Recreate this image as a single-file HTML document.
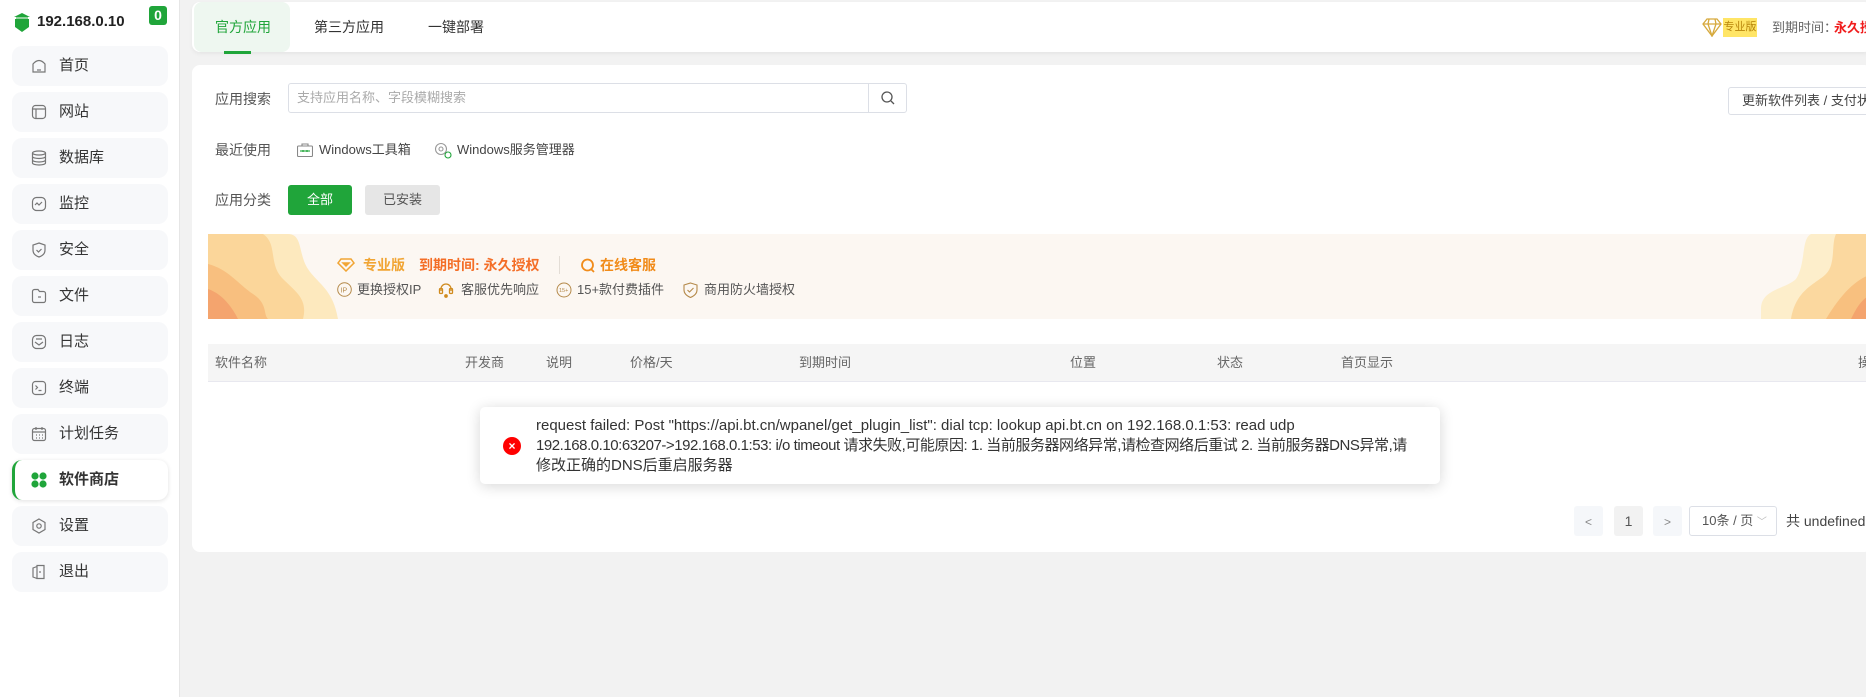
<!DOCTYPE html>
<html><head><meta charset="utf-8"><style>
*{box-sizing:border-box;margin:0;padding:0}
body{width:1866px;height:697px;overflow:hidden;background:#f2f2f2;font-family:"Liberation Sans","Noto Sans CJK SC",sans-serif;color:#333;position:relative;font-size:14px}
.abs{position:absolute;white-space:nowrap}
#side{left:0;top:0;width:180px;height:697px;background:#fff;border-right:1px solid #e6e6e6}
.nav{position:absolute;left:12px;width:156px;height:40px;background:#f7f8fa;border-radius:10px;font-size:15px;line-height:40px;padding-left:47px;color:#333}
.nav svg{position:absolute;left:19px;top:12px}
.nav.act{background:#fff;box-shadow:0 1px 5px rgba(0,0,0,.12);border-left:3px solid #20a53a;padding-left:44px;font-weight:bold}
.nav.act svg{left:16px}
#tabs{left:192px;top:2px;width:1680px;height:50px;background:#fff;border-radius:8px;box-shadow:0 2px 4px rgba(0,0,0,.05)}
.tab{position:absolute;top:0;height:50px;line-height:50px;font-size:14px;color:#333}
#card{left:192px;top:65px;width:1680px;height:487px;background:#fff;border-radius:8px}
.lbl{position:absolute;font-size:14px;color:#555}
.th{position:absolute;top:0;line-height:37px;font-size:13px;color:#666}
.pg{position:absolute;top:441px;height:30px;width:29px;background:#f5f7fa;border-radius:3px;text-align:center;line-height:30px;color:#888;font-size:14px}
</style></head><body>
<div id="side" class="abs">
  <svg class="abs" style="left:13px;top:13px" width="18" height="19" viewBox="0 0 18 19"><path d="M9 0 L1 4 L17 4Z" fill="#20a53a"/><path d="M2 6 H16 V14 L9 19 L2 14Z" fill="#20a53a"/><rect x="3" y="4.5" width="12" height="1" fill="#20a53a"/></svg>
  <div class="abs" style="left:37px;top:12px;font-size:15px;font-weight:bold;color:#222;line-height:20px">192.168.0.10</div>
  <div class="abs" style="left:149px;top:6px;width:18px;height:19px;background:#20a53a;border-radius:3px;color:#fff;font-weight:bold;text-align:center;line-height:19px;font-size:14px">0</div>

  <div class="nav" style="top:46px"><svg width="16" height="16" viewBox="0 0 16 16" fill="none" stroke="#777" stroke-width="1.2"><path d="M2 6 Q8 -1 14 6 V14 H2Z"/><path d="M6 12h4"/></svg>首页</div>
  <div class="nav" style="top:92px"><svg width="16" height="16" viewBox="0 0 16 16" fill="none" stroke="#777" stroke-width="1.2"><rect x="1.5" y="1.5" width="13" height="13" rx="3"/><path d="M1.5 5h13M5 5v9.5"/></svg>网站</div>
  <div class="nav" style="top:138px"><svg width="16" height="16" viewBox="0 0 16 16" fill="none" stroke="#777" stroke-width="1.2"><ellipse cx="8" cy="3" rx="6.5" ry="2"/><path d="M1.5 3v10c0 1.2 3 2 6.5 2s6.5-.8 6.5-2V3M1.5 6.5c0 1.2 3 2 6.5 2s6.5-.8 6.5-2M1.5 10c0 1.2 3 2 6.5 2s6.5-.8 6.5-2"/></svg>数据库</div>
  <div class="nav" style="top:184px"><svg width="16" height="16" viewBox="0 0 16 16" fill="none" stroke="#777" stroke-width="1.2"><rect x="1.5" y="1.5" width="13" height="13" rx="4"/><path d="M4 9l2-2 2 2 3-3"/></svg>监控</div>
  <div class="nav" style="top:230px"><svg width="16" height="16" viewBox="0 0 16 16" fill="none" stroke="#777" stroke-width="1.2"><path d="M8 1 L14 3 V8 C14 12 11 14 8 15 C5 14 2 12 2 8 V3Z"/><path d="M5.5 8l2 2 3-3"/></svg>安全</div>
  <div class="nav" style="top:276px"><svg width="16" height="16" viewBox="0 0 16 16" fill="none" stroke="#777" stroke-width="1.2"><path d="M1.5 3.5a2 2 0 012-2H7l1.5 2h4a2 2 0 012 2v7a2 2 0 01-2 2h-9a2 2 0 01-2-2z"/><path d="M7 9h3"/></svg>文件</div>
  <div class="nav" style="top:322px"><svg width="16" height="16" viewBox="0 0 16 16" fill="none" stroke="#777" stroke-width="1.2"><rect x="1.5" y="1.5" width="13" height="13" rx="4"/><path d="M5 5h6M4 8l4 3 4-3"/></svg>日志</div>
  <div class="nav" style="top:368px"><svg width="16" height="16" viewBox="0 0 16 16" fill="none" stroke="#777" stroke-width="1.2"><rect x="1.5" y="1.5" width="13" height="13" rx="3"/><path d="M4.5 5.5l2 2-2 2M7.5 10.5h3"/></svg>终端</div>
  <div class="nav" style="top:414px"><svg width="16" height="16" viewBox="0 0 16 16" fill="none" stroke="#777" stroke-width="1.2"><rect x="1.5" y="2.5" width="13" height="12" rx="2"/><path d="M1.5 6h13M5 1v3M11 1v3M5 9h1M8 9h1M11 9h1M5 12h1M8 12h1M11 12h1"/></svg>计划任务</div>
  <div class="nav act" style="top:460px"><svg width="16" height="16" viewBox="0 0 16 16" fill="#20a53a"><circle cx="4" cy="4" r="3.6"/><circle cx="12" cy="4" r="3.6"/><circle cx="4" cy="12" r="3.6"/><circle cx="12" cy="12" r="3.6"/></svg>软件商店</div>
  <div class="nav" style="top:506px"><svg width="16" height="16" viewBox="0 0 16 16" fill="none" stroke="#777" stroke-width="1.2"><path d="M8 1l6 3.5v7L8 15l-6-3.5v-7z"/><circle cx="8" cy="8" r="2.2"/></svg>设置</div>
  <div class="nav" style="top:552px"><svg width="16" height="16" viewBox="0 0 16 16" fill="none" stroke="#777" stroke-width="1.2"><path d="M6 1.5h7v13H6zM6 2.5L2 4v9l4 1.5M9 7v2"/></svg>退出</div>
</div>

<div id="tabs" class="abs">
  <div class="abs" style="left:2px;top:0;width:96px;height:50px;background:#eef7f0;border-radius:8px"></div>
  <div class="tab" style="left:23px;color:#20a53a">官方应用</div>
  <div class="abs" style="left:32px;top:49px;width:27px;height:3px;background:#20a53a"></div>
  <div class="tab" style="left:122px">第三方应用</div>
  <div class="tab" style="left:236px">一键部署</div>
  <svg class="abs" style="left:1510px;top:16px" width="20" height="19" viewBox="0 0 20 19" fill="none" stroke="#d6a93c" stroke-width="1.3"><path d="M5 1h10l4 5-9 12L1 6z"/><path d="M1 6h18M7 1L6 6l4 12 4-12-1-5"/></svg>
  <div class="abs" style="left:1531px;top:16px;width:34px;height:19px;background:#ffe566;color:#b8860b;font-size:11px;line-height:19px;text-align:center">专业版</div>
  <div class="abs" style="left:1580px;top:17px;font-size:13px;color:#666;line-height:18px">到期时间：</div>
  <div class="abs" style="left:1642px;top:17px;font-size:13px;color:#f01d1d;font-weight:bold;line-height:18px">永久授权</div>
</div>

<div id="card" class="abs">
  <div class="lbl" style="left:23px;top:24px;line-height:20px">应用搜索</div>
  <div class="abs" style="left:96px;top:18px;width:581px;height:30px;border:1px solid #dcdfe6;border-radius:3px 0 0 3px;font-size:13px;color:#aaa;line-height:28px;padding-left:8px">支持应用名称、字段模糊搜索</div>
  <div class="abs" style="left:676px;top:18px;width:39px;height:30px;border:1px solid #dcdfe6;border-radius:0 3px 3px 0"></div>
  <svg class="abs" style="left:689px;top:26px" width="14" height="14" viewBox="0 0 14 14" fill="none" stroke="#555" stroke-width="1.3"><circle cx="6" cy="6" r="5"/><path d="M10 10l3 3"/></svg>
  <div class="abs" style="left:1536px;top:22px;width:160px;height:28px;border:1px solid #dcdfe6;border-radius:3px;font-size:13px;color:#444;line-height:26px;padding-left:13px;overflow:hidden">更新软件列表 / 支付状态</div>

  <div class="lbl" style="left:23px;top:75px;line-height:20px">最近使用</div>
  <svg class="abs" style="left:105px;top:78px" width="16" height="14" viewBox="0 0 16 14" fill="none" stroke="#888" stroke-width="1.1"><rect x="0.5" y="3" width="15" height="10.5" rx="1"/><path d="M5 3V1h6v2"/><path d="M3 8h10" stroke="#20a53a"/><circle cx="6" cy="8" r="1" fill="#20a53a" stroke="none"/><circle cx="10" cy="8" r="1" fill="#20a53a" stroke="none"/></svg>
  <div class="abs" style="left:127px;top:75px;font-size:13px;color:#444;line-height:20px">Windows工具箱</div>
  <svg class="abs" style="left:242px;top:77px" width="18" height="17" viewBox="0 0 18 17" fill="none" stroke="#999" stroke-width="1.1"><circle cx="7" cy="7" r="5.5"/><circle cx="7" cy="7" r="2"/><circle cx="14" cy="13" r="3" stroke="#20a53a"/></svg>
  <div class="abs" style="left:265px;top:75px;font-size:13px;color:#444;line-height:20px">Windows服务管理器</div>

  <div class="lbl" style="left:23px;top:125px;line-height:20px">应用分类</div>
  <div class="abs" style="left:96px;top:120px;width:64px;height:30px;background:#20a53a;border-radius:3px;color:#fff;font-size:13px;text-align:center;line-height:30px">全部</div>
  <div class="abs" style="left:173px;top:120px;width:75px;height:30px;background:#e6e6e6;border-radius:3px;color:#555;font-size:13px;text-align:center;line-height:30px">已安装</div>

  <div class="abs" style="left:16px;top:169px;width:1664px;height:85px;background:#fcf7f2;overflow:hidden">
    <svg class="abs" style="left:0;top:0" width="150" height="85" viewBox="0 0 150 85"><path d="M0 0H80C95 0 90 20 100 35 110 50 125 55 130 85H0Z" fill="#fde9be"/><path d="M0 0H55C70 10 60 30 75 45 88 58 100 65 95 85H0Z" fill="#fbd69a"/><path d="M0 30C20 35 30 50 45 60 60 70 55 80 60 85H0Z" fill="#f8bf7f"/><path d="M0 55C15 60 25 75 30 85H0Z" fill="#f4a46e"/></svg>
    <svg class="abs" style="left:1553px;top:0" width="111" height="85" viewBox="0 0 111 85"><path d="M111 0H50C40 5 45 30 35 45 25 55 0 55 0 75V85H111Z" fill="#fdeecb"/><path d="M111 0H75C70 10 75 30 65 40 55 50 35 55 30 85H111Z" fill="#fbd89f"/><path d="M111 40C95 45 80 60 65 85H111Z" fill="#f8c07f"/><path d="M111 60C100 65 95 75 90 85H111Z" fill="#f4a46e"/></svg>
    <svg class="abs" style="left:129px;top:24px" width="18" height="14" viewBox="0 0 18 14" fill="none" stroke="#f1a534" stroke-width="1.5"><path d="M4 1h10l3 4-8 8-8-8z"/><path d="M6 5h6l-3 3z" fill="#f1a534"/></svg>
    <div class="abs" style="left:155px;top:22px;font-size:14px;font-weight:bold;color:#f1a534;line-height:19px">专业版</div>
    <div class="abs" style="left:211px;top:22px;font-size:14px;font-weight:bold;color:#f46e27;line-height:19px">到期时间: 永久授权</div>
    <div class="abs" style="left:351px;top:22px;width:1px;height:18px;background:#e3ddd6"></div>
    <svg class="abs" style="left:372px;top:24px" width="16" height="15" viewBox="0 0 16 15" fill="none" stroke="#f18b19" stroke-width="1.8"><circle cx="7.5" cy="7" r="5.5"/><path d="M11 11l3 3"/></svg>
    <div class="abs" style="left:392px;top:22px;font-size:14px;font-weight:bold;color:#f18b19;line-height:19px">在线客服</div>
    <svg class="abs" style="left:129px;top:48px" width="15" height="15" viewBox="0 0 15 15" fill="none" stroke="#b58a4b" stroke-width="1"><circle cx="7.5" cy="7.5" r="6.8"/><text x="3.5" y="10.5" font-size="7" fill="#b58a4b" stroke="none" font-family="Liberation Sans">IP</text></svg>
    <div class="abs" style="left:149px;top:47px;font-size:13px;color:#555;line-height:18px">更换授权IP</div>
    <svg class="abs" style="left:230px;top:48px" width="16" height="16" viewBox="0 0 16 16" fill="none" stroke="#d08b1e" stroke-width="1.3"><path d="M3 9V7a5 5 0 0110 0v2"/><rect x="1.5" y="6.5" width="3" height="5" rx="1"/><rect x="11.5" y="6.5" width="3" height="5" rx="1"/><circle cx="8" cy="14" r="1.2" fill="#d08b1e"/></svg>
    <div class="abs" style="left:253px;top:47px;font-size:13px;color:#555;line-height:18px">客服优先响应</div>
    <svg class="abs" style="left:348px;top:48px" width="16" height="16" viewBox="0 0 16 16" fill="none" stroke="#b58a4b" stroke-width="1"><circle cx="8" cy="8" r="7"/><text x="3" y="10" font-size="5.5" fill="#b58a4b" stroke="none" font-family="Liberation Sans">15+</text></svg>
    <div class="abs" style="left:369px;top:47px;font-size:13px;color:#555;line-height:18px">15+款付费插件</div>
    <svg class="abs" style="left:475px;top:48px" width="15" height="16" viewBox="0 0 15 16" fill="none" stroke="#b58a4b" stroke-width="1.1"><path d="M7.5 1L14 3v5c0 4-3 6-6.5 7.5C4 14 1 12 1 8V3z"/><path d="M4.5 8l2 2 4-4"/></svg>
    <div class="abs" style="left:496px;top:47px;font-size:13px;color:#555;line-height:18px">商用防火墙授权</div>
  </div>

  <div class="abs" style="left:16px;top:279px;width:1664px;height:38px;background:#f5f5f5;border-bottom:1px solid #e8e8ef">
    <div class="th" style="left:7px">软件名称</div>
    <div class="th" style="left:257px">开发商</div>
    <div class="th" style="left:338px">说明</div>
    <div class="th" style="left:422px">价格/天</div>
    <div class="th" style="left:591px">到期时间</div>
    <div class="th" style="left:862px">位置</div>
    <div class="th" style="left:1009px">状态</div>
    <div class="th" style="left:1133px">首页显示</div>
    <div class="th" style="left:1650px">操作</div>
  </div>

  <div class="pg" style="left:1382px"><span style="font-size:12px">&lt;</span></div>
  <div class="pg" style="left:1422px;background:#f2f2f2;color:#555">1</div>
  <div class="pg" style="left:1461px"><span style="font-size:12px">&gt;</span></div>
  <div class="abs" style="left:1497px;top:441px;width:88px;height:30px;border:1px solid #dcdfe6;border-radius:3px;font-size:13px;color:#555;line-height:28px;padding-left:12px">10条 / 页 <span style="color:#bbb;font-size:10px">﹀</span></div>
  <div class="abs" style="left:1594px;top:441px;font-size:14px;color:#444;line-height:30px">共 undefined 条</div>
</div>

<div class="abs" style="left:480px;top:407px;width:960px;height:77px;background:#fff;border-radius:5px;box-shadow:0 2px 14px rgba(0,0,0,.16)">
  <div class="abs" style="left:23px;top:30px;width:18px;height:18px;border-radius:50%;background:#f00;color:#fff;font-size:12px;font-weight:bold;text-align:center;line-height:18px">×</div>
  <div class="abs" style="left:56px;top:9px;font-size:15px;line-height:20px;color:#333">request failed: Post "https://api.bt.cn/wpanel/get_plugin_list": dial tcp: lookup api.bt.cn on 192.168.0.1:53: read udp<br><span style="letter-spacing:-0.45px">192.168.0.10:63207-&gt;192.168.0.1:53: i/o timeout 请求失败,可能原因: 1. 当前服务器网络异常,请检查网络后重试 2. 当前服务器DNS异常,请</span><br>修改正确的DNS后重启服务器</div>
</div>
</body></html>
